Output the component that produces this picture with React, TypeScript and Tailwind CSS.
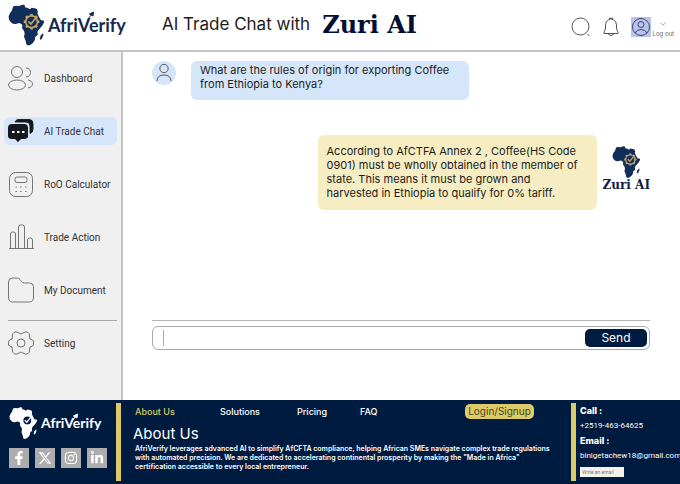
import type { ReactNode } from 'react'
import clsx from 'clsx'
import { FaFacebookF, FaLinkedinIn, FaInstagram } from 'react-icons/fa'
import { FaXTwitter } from 'react-icons/fa6'

const GEAR_TEETH = [0, 45, 90, 135, 180, 225, 270, 315]

function AfricaMark({ className, land, gear, cut }: { className: string; land: string; gear: string; cut: string }) {
  return (
    <svg viewBox="24 18 110 124" className={className} aria-hidden="true">
      <path
        fill={land}
        d="M40 23l8-2 10 1 10-4 7 1 1 7 8 2 7 4 5-5 9 2 7 2 3 6-1 8 4 9 6 11 11 2-1 5-6 11-11 12-3 6 1 9-8 7-1 9-6 9-8 6-8 2-4-4-2-10-5-13 2-11-2-7-6-8 1-9-4-5-7-2-9 3-9-1-7-5-5-8-1-10 4-9 6-8z"
      />
      <path fill={land} d="M131 105l1 6-5 12-4 2-2-4 3-9z" />
      <circle cx="96" cy="70" r="18" fill={cut} stroke={gear} strokeWidth="5" />
      {GEAR_TEETH.map((angle) => (
        <rect key={angle} x="92" y="46" width="8" height="7" fill={gear} transform={`rotate(${angle} 96 70)`} />
      ))}
      <path d="M86 69l8 8 17-21" fill="none" stroke={gear} strokeWidth="5" />
    </svg>
  )
}

function Logo({ light }: { light?: boolean }) {
  return (
    <div className="flex items-center">
      {light ? (
        <AfricaMark className="h-8 w-7" land="#fff" gear="#fff" cut="#001b40" />
      ) : (
        <AfricaMark className="h-11 w-9" land="#112d59" gear="#c2a468" cut="#112d59" />
      )}
      <span
        className={clsx(
          "relative font-['Lato',sans-serif] font-bold",
          light ? 'ml-1 text-sm text-white' : 'ml-1 text-lg text-[#14294f]'
        )}
      >
        AfriVerify
        <svg viewBox="0 0 8 8" className="absolute top-0 left-1/2 h-2 w-2" aria-hidden="true">
          <path d="M1 8L5 3M2.500 3L6.500 1 6 5z" fill="currentColor" stroke="currentColor" strokeWidth="1" />
        </svg>
      </span>
    </div>
  )
}

function LineIcon({ children }: { children: ReactNode }) {
  return (
    <svg viewBox="0 0 26 26" className="h-[26px] w-[26px] shrink-0" fill="none" stroke="#666" strokeWidth="0.9" aria-hidden="true">
      {children}
    </svg>
  )
}

const menu = [
  {
    label: 'Dashboard',
    icon: (
      <LineIcon>
        <circle cx="9" cy="7" r="5.500" />
        <ellipse cx="9" cy="20" rx="8.500" ry="5" />
        <path d="M18 3c6 0 6 9 0 9M20 15c6 1 6 7 0 8" />
      </LineIcon>
    ),
  },
  {
    label: 'AI Trade Chat',
    active: true,
    icon: (
      <LineIcon>
        <path d="M7 4c1-2 2-2.500 4-2.500h10q4 0 4 4v6q0 3-3 4V8q0-4-4-4z" fill="#15181c" stroke="#15181c" />
        <path
          d="M4 6h12q4 0 4 4v8q0 3-4 3h-3l-3 3-3-3H4q-4 0-4-3v-8q0-4 4-4z"
          fill="#15181c"
          stroke="none"
        />
        <path d="M4 14h2.500M9 14h2.500M14 14h2.500" stroke="#fff" strokeWidth="2" />
      </LineIcon>
    ),
  },
  {
    label: 'RoO Calculator',
    icon: (
      <LineIcon>
        <rect x="1.500" y="1.500" width="23" height="24" rx="6" />
        <rect x="7" y="6" width="12" height="5.500" rx="2" />
        <path d="M7.500 16h1.500M12.200 16h1.500M17 16h1.500M7.500 20.500h1.500M12.200 20.500h1.500M17 20.500h1.500" />
      </LineIcon>
    ),
  },
  {
    label: 'Trade Action',
    icon: (
      <LineIcon>
        <path d="M1 24.500h25M2.500 24.500V10q0-2 2-2h1q2 0 2 2v14.500M10.500 24.500V3q0-2 2-2h2q2 0 2 2v21.500M19.500 24.500V16q0-2 2-2h1q2 0 2 2v8.500" />
      </LineIcon>
    ),
  },
  {
    label: 'My Document',
    icon: (
      <LineIcon>
        <path d="M0.500 20V5q0-4 4-4h4.500q2 0 3 1.500l1.500 2q1 1.500 3 1.500h5q4 0 4 4v10q0 5-4 5h-17q-4 0-4-5z" />
      </LineIcon>
    ),
  },
]

function MenuItem({ label, icon, active }: { label: string; icon: ReactNode; active?: boolean }) {
  return (
    <a
      href="#"
      className={clsx(
        "flex h-7 items-center gap-2.5 rounded-md pl-1 font-['Roboto',sans-serif] text-[10px] whitespace-nowrap text-[#333]",
        active && 'bg-[#d6e6fa]'
      )}
    >
      {icon}
      {label}
    </a>
  )
}

const socials = [
  { name: 'Facebook', icon: <FaFacebookF /> },
  { name: 'X', icon: <FaXTwitter /> },
  { name: 'Instagram', icon: <FaInstagram /> },
  { name: 'LinkedIn', icon: <FaLinkedinIn /> },
]

export default function App() {
  return (
    <div className="flex min-h-screen flex-col bg-white font-['Inter',sans-serif] text-[#1c1c1c]">
      {/* Header */}
      <header className="flex h-[52px] items-center border-b-2 border-[#c4c4c4] pr-1.5 pl-2">
        <div className="w-[154px] shrink-0">
          <Logo />
        </div>
        <h1 className="flex items-center gap-3 text-[17px] whitespace-nowrap">
          AI Trade Chat with
          <span className="font-['DejaVu_Serif',serif] text-2xl leading-7 font-bold text-[#050f35]">Zuri AI</span>
        </h1>
        <div className="ml-auto flex items-center pt-1">
          <button aria-label="Search" className="mr-3">
            <svg viewBox="0 0 20 20" className="h-5 w-5" fill="none" stroke="#555" strokeWidth="1">
              <circle cx="9.500" cy="9.500" r="8.500" />
              <path d="M16.500 17l2 2" />
            </svg>
          </button>
          <button aria-label="Notifications" className="mr-3">
            <svg viewBox="0 0 16 20" className="h-5 w-4" fill="none" stroke="#555" strokeWidth="1">
              <path d="M6 2.500q2-2 4 0 3.500 1.500 3.500 5.500v3q0 2 1.500 4v1.500H1V15q1.500-2 1.500-4V8Q2.500 4 6 2.500zM5.500 16.500q0 2 2.500 2t2.500-2" />
              <path d="M6 1.500h4" strokeWidth="1.500" />
            </svg>
          </button>
          <button aria-label="Profile" className="bg-[#b8c4ee]">
            <svg viewBox="0 0 20 20" className="h-5 w-5" fill="none" stroke="#3d4766" strokeWidth="1">
              <circle cx="10" cy="10" r="8.500" />
              <circle cx="10" cy="7.500" r="3" />
              <path d="M4 16q1.500-3.500 6-3.500t6 3.500" />
            </svg>
          </button>
          <button className="ml-0.5 flex flex-col items-center gap-1 pt-1 text-[6px] leading-[7px] text-[#666]">
            <svg viewBox="0 0 6 4" className="h-1 w-1.5" fill="none" stroke="#888" strokeWidth="0.7" aria-hidden="true">
              <path d="M0.500 0.500L3 3.300l2.500-2.800" />
            </svg>
            Log out
          </button>
        </div>
      </header>

      <div className="flex flex-1">
        {/* Sidebar */}
        <aside className="w-[123px] shrink-0 border-r-2 border-[#c4c4c4] bg-[#f0f0f0] pt-3 pr-1 pl-1">
          <nav className="flex flex-col gap-[25px]">
            {menu.map((item) => (
              <MenuItem key={item.label} {...item} />
            ))}
          </nav>
          <div className="mt-4 ml-1 border-t border-[#aaa] pt-2" />
          <MenuItem
            label="Setting"
            icon={
              <LineIcon>
                <circle cx="13" cy="13" r="4" />
                <path d="M10 2.500q3 3 6 0 2-1.500 4 0 2 1 1.500 3.500-.5 4 3 4 1.500.500 1 3 0 2.500-1 3-3.500 0-3 4 .5 2.500-1.500 3.500-2 1.500-4 0-3-3-6 0-2 1.500-4 0-2-1-1.500-3.500.5-4-3-4-1.500-.500-1-3 0-2.500 1-3 3.500 0 3-4Q4 3.500 6 2.500q2-1.500 4 0z" />
              </LineIcon>
            }
          />
        </aside>

        {/* Chat */}
        <main className="flex flex-1 flex-col pr-[30px] pb-[50px] pl-[29px]">
          <div className="flex items-start gap-[15px] pt-[9px]">
            <svg viewBox="0 0 24 24" className="h-6 w-6 rounded-full bg-[#d6e6fa]" fill="none" stroke="#555" strokeWidth="1" aria-hidden="true">
              <circle cx="12" cy="7.500" r="4.200" />
              <path d="M5 20q0-6 7-6t7 6" />
            </svg>
            <p className="w-[278px] rounded-md bg-[#d6e6fa] px-[9px] pt-0.5 pb-[9px] text-[11px] leading-[14px]">
              What are the rules of origin for exporting Coffee from Ethiopia to Kenya?
            </p>
          </div>
          <div className="mt-[35px] flex items-start justify-end gap-1.5">
            <p className="w-[279px] rounded-md bg-[#f6edc2] pt-[9px] pr-[15px] pb-2.5 pl-[9px] text-[11px] leading-[14px]">
              According to AfCTFA Annex 2 , Coffee(HS Code 0901) must be wholly obtained in the member of state. This
              means it must be grown and harvested in Ethiopia to qualify for 0% tariff.
            </p>
            <div className="flex flex-col items-center pt-[11px]">
              <AfricaMark className="h-8 w-7" land="#112d59" gear="#c2a468" cut="#112d59" />
              <span className="font-['DejaVu_Serif',serif] text-xs leading-[14px] font-bold whitespace-nowrap text-[#112044]">
                Zuri AI
              </span>
            </div>
          </div>

          <form className="mt-auto border-t border-[#b5b5b5] pt-[5px]" onSubmit={(e) => e.preventDefault()}>
            <div className="flex h-6 items-center rounded-md border border-[#aaa] pr-0.5 pl-2.5">
              <span className="h-4 w-px bg-[#aaa]" />
              <input aria-label="Message" className="min-w-0 flex-1 px-1 text-[11px] outline-none" />
              <button className="h-[18px] w-[62px] rounded-[5px] bg-[#001b40] text-xs leading-[14px] text-white">Send</button>
            </div>
          </form>
        </main>
      </div>

      {/* Footer */}
      <footer className="flex h-[84px] bg-[#001b40] py-[3px] text-white">
        <div className="w-[116px] shrink-0 pt-1 pl-[9px]">
          <Logo light />
          <div className="mt-[9px] flex gap-1.5">
            {socials.map((s) => (
              <a
                key={s.name}
                href="#"
                aria-label={s.name}
                className="flex h-5 w-5 items-center justify-center bg-[#adadad] text-sm"
              >
                {s.icon}
              </a>
            ))}
          </div>
        </div>
        <div className="w-[5px] shrink-0 bg-[#dccb68]" />
        <div className="min-w-0 flex-1 pt-px pl-3">
          <nav className="flex h-[15px] items-center pr-[37px] pl-0.5 text-[9px] font-medium">
            <a href="#" className="w-[85px] text-[#dccb68]">About Us</a>
            <a href="#" className="w-[77px]">Solutions</a>
            <a href="#" className="w-[63px]">Pricing</a>
            <a href="#">FAQ</a>
            <a
              href="#"
              className="ml-auto flex h-[15px] w-[69px] items-center justify-center rounded-[5px] bg-[#dccb68] text-[10px] font-normal text-[#4a4420]"
            >
              Login/Signup
            </a>
          </nav>
          <h2 className="mt-1.5 text-[15px] leading-[18px]">About Us</h2>
          <p className="pt-px pr-3 pl-0.5 text-[7px] leading-[9px] font-semibold">
            AfriVerify leverages advanced AI to simplify AfCFTA compliance, helping African SMEs navigate complex trade
            regulations with automated precision. We are dedicated to accelerating continental prosperity by making the
            "Made in Africa" certification accessible to every local entrepreneur.
          </p>
        </div>
        <div className="w-[5px] shrink-0 bg-[#dccb68]" />
        <address className="w-[104px] shrink-0 pl-1 font-['Roboto',sans-serif] text-[8px] leading-[15px] whitespace-nowrap not-italic">
          <h3 className="font-['Inter',sans-serif] text-[9px] font-extrabold">Call :</h3>
          <a href="tel:+251946364625" className="block">+2519-463-64625</a>
          <h3 className="font-['Inter',sans-serif] text-[9px] font-extrabold">Email :</h3>
          <a href="mailto:binigetachew18@gmail.com" className="block">binigetachew18@gmail.com</a>
          <input
            aria-label="Write an email"
            placeholder="Write an email"
            className="mt-1 block h-2.5 w-11 bg-[#f4f2ea] px-0.5 text-[5px] placeholder:text-[#777]"
          />
        </address>
      </footer>
    </div>
  )
}
